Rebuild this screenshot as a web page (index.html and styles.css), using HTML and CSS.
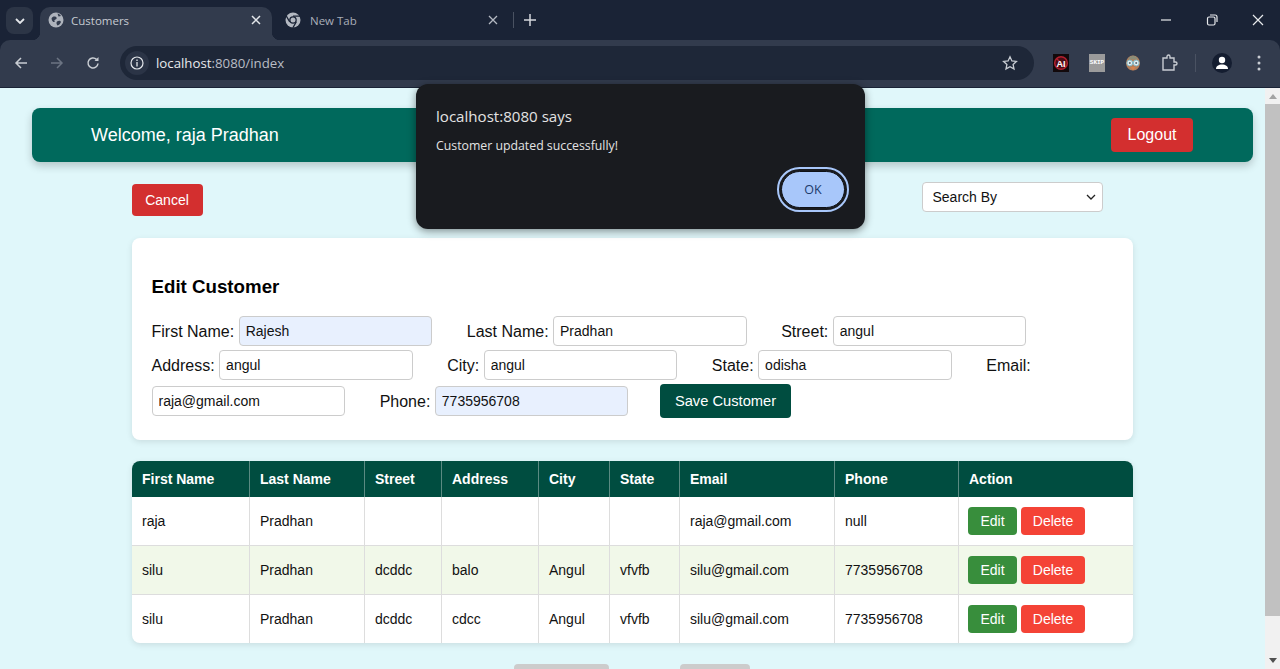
FILE: index.html
```html
<!DOCTYPE html>
<html>
<head>
	<meta charset="utf-8">
	<meta name="viewport" content="width=device-width, initial-scale=1">
	<title>Customers</title>
	<link rel="stylesheet" href="styles.css">
</head>
<body>
	<div class="browser-top">
		<div class="tabstrip">
			<div class="tab-search">
				<svg width="10" height="6" viewBox="0 0 10 6"><path d="M1 1l4 4 4-4" fill="none" stroke="#e3e6ea" stroke-width="1.8"/></svg>
			</div>
			<div class="tab tab-active">
				<svg class="tab-icon" width="16" height="16" viewBox="0 0 16 16"><circle cx="8" cy="8" r="7.500" fill="#aeb3bc"/><path d="M3.500 6.500c1-2 3-2.500 4.500-1.500 1 .7 1 2-.5 2.500-1.300.4-1.500 1.500-.5 2.500-1.500.5-3-.5-3.500-3.500zM9 9.500c1.500-1 3.500-1 4 .5-.5 1.500-2 3-3.500 3.500-1-1-1.500-3-.5-4z" fill="#323b4d"/><path d="M9.500 1.500c1.500.3 2.800 1.300 3.500 2.500l-2.500.5z" fill="#323b4d"/></svg>
				<span class="tab-title">Customers</span>
				<svg class="tab-close" width="10" height="10" viewBox="0 0 10 10"><path d="M1 1l8 8M9 1l-8 8" stroke="#e3e6ea" stroke-width="1.500"/></svg>
			</div>
			<div class="tab">
				<svg class="tab-icon" width="16" height="16" viewBox="0 0 16 16"><circle cx="8" cy="8" r="7.500" fill="#b4b9c2"/><circle cx="8" cy="8" r="3.800" fill="#1a2336"/><circle cx="8" cy="8" r="2.500" fill="#b4b9c2"/><path d="M8 4.200h7M4.700 9.900L1.200 3.900M11.300 9.900L7.800 15.900" stroke="#1a2336" stroke-width="1.200" fill="none"/></svg>
				<span class="tab-title dim">New Tab</span>
				<svg class="tab-close" width="10" height="10" viewBox="0 0 10 10"><path d="M1 1l8 8M9 1l-8 8" stroke="#b4b9c2" stroke-width="1.300"/></svg>
			</div>
			<div class="tab-sep"></div>
			<svg class="tab-new" width="12" height="12" viewBox="0 0 12 12"><path d="M6 0v12M0 6h12" stroke="#d5d8dd" stroke-width="1.500"/></svg>
			<div class="window-btns">
				<svg width="12" height="12" viewBox="0 0 12 12"><path d="M1 6h10" stroke="#e8eaed" stroke-width="1.200"/></svg>
				<svg width="12" height="12" viewBox="0 0 12 12"><rect x="1.500" y="3" width="7.500" height="8" rx="1.500" fill="none" stroke="#e8eaed" stroke-width="1.200"/><path d="M4 1h5a2 2 0 0 1 2 2v5" fill="none" stroke="#e8eaed" stroke-width="1.200"/></svg>
				<svg width="12" height="12" viewBox="0 0 12 12"><path d="M1 1l10 10M11 1L1 11" stroke="#e8eaed" stroke-width="1.200"/></svg>
			</div>
		</div>
		<div class="toolbar">
			<div class="nav-btns">
				<svg width="14" height="14" viewBox="0 0 14 14"><path d="M13 7H2M7 2L2 7l5 5" fill="none" stroke="#c9cdd3" stroke-width="1.500"/></svg>
				<svg width="14" height="14" viewBox="0 0 14 14"><path d="M1 7h11M7 2l5 5-5 5" fill="none" stroke="#6c7483" stroke-width="1.500"/></svg>
				<svg width="14" height="14" viewBox="0 0 14 14"><path d="M12 7.500A5 5 0 1 1 10.500 3.400" fill="none" stroke="#c9cdd3" stroke-width="1.500"/><path d="M12.500 1v4h-4z" fill="#c9cdd3"/></svg>
			</div>
			<div class="urlbar">
				<div class="url-info">
					<svg width="14" height="14" viewBox="0 0 14 14"><circle cx="7" cy="7" r="6" fill="none" stroke="#e3e6ea" stroke-width="1.200"/><path d="M7 6v4.500M7 3.500v1.400" stroke="#e3e6ea" stroke-width="1.300"/></svg>
				</div>
				<span class="url-text">localhost<span class="url-rest">:8080/index</span></span>
				<svg class="url-star" width="16" height="16" viewBox="0 0 16 16"><path d="M8 1.800l1.900 4.100 4.500.5-3.300 3 .9 4.500L8 11.700l-4 2.200.9-4.500-3.300-3 4.500-.5z" fill="none" stroke="#c9cdd3" stroke-width="1.300"/></svg>
			</div>
			<div class="ext-btns">
				<svg class="ext" width="16" height="18" viewBox="0 0 16 18"><rect width="16" height="18" fill="#12090b"/><circle cx="8" cy="9" r="6.300" fill="#4a0d16" stroke="#b3202f" stroke-width="1.500"/><path d="M3.500 4.500l9 9" stroke="#b3202f" stroke-width="1.300"/><text x="8" y="12.500" class="ext-ai">AI</text></svg>
				<div class="ext ext-skip">SKIP</div>
				<svg class="ext" width="16" height="18" viewBox="0 0 16 18"><path d="M1 9a7 7.500 0 0 1 14 0c0 4-3 7.500-7 7.500S1 13 1 9z" fill="#b5805c"/><path d="M3 5.500C4 3 6 1.800 8 1.800s4 1.200 5 3.700z" fill="#8c8d78"/><path d="M5.500 13h5L8 16.500z" fill="#d9824a"/><circle cx="4.800" cy="9" r="2.900" fill="#dfeef1" stroke="#86b9c6"/><circle cx="11.200" cy="9" r="2.900" fill="#dfeef1" stroke="#86b9c6"/><circle cx="4.800" cy="9" r="1" fill="#5b6a72"/><circle cx="11.200" cy="9" r="1" fill="#5b6a72"/></svg>
				<svg class="ext ext-puzzle" width="18" height="18" viewBox="0 0 18 18"><path d="M2 4h4V2.500a1.500 1.500 0 0 1 3 0V4h4v4h1.500a1.500 1.500 0 0 1 0 3H13v5H2z" fill="none" stroke="#c9cdd3" stroke-width="1.400"/></svg>
				<div class="tool-sep"></div>
				<div class="avatar">
					<svg width="14" height="14" viewBox="0 0 14 14"><circle cx="7" cy="4" r="3.200" fill="#fff"/><path d="M1 13c0-3 2.500-4.500 6-4.500s6 1.500 6 4.500z" fill="#fff"/></svg>
				</div>
				<svg class="menu-dots" width="4" height="16" viewBox="0 0 4 16"><circle cx="2" cy="2" r="1.500" fill="#c9cdd3"/><circle cx="2" cy="8" r="1.500" fill="#c9cdd3"/><circle cx="2" cy="14" r="1.500" fill="#c9cdd3"/></svg>
			</div>
		</div>
	</div>

	<div class="viewport">
		<div class="page">
			<div class="welcome">
				<span class="welcome-text">Welcome, raja Pradhan</span>
				<button class="logout">Logout</button>
			</div>

			<div class="container">
				<div class="actions">
					<button class="cancel">Cancel</button>
					<select class="search-by">
						<option>Search By</option>
					</select>
				</div>

				<div class="card">
					<h3>Edit Customer</h3>
					<form class="edit-form">
						<label>First Name:</label>
						<input class="autofilled" type="text" value="Rajesh">
						<label>Last Name:</label>
						<input type="text" value="Pradhan">
						<label>Street:</label>
						<input type="text" value="angul">
						<label>Address:</label>
						<input type="text" value="angul">
						<label>City:</label>
						<input type="text" value="angul">
						<label>State:</label>
						<input type="text" value="odisha">
						<label>Email:</label>
						<input type="text" value="raja@gmail.com">
						<label>Phone:</label>
						<input class="autofilled" type="text" value="7735956708"><button class="save" type="button">Save Customer</button>
					</form>
				</div>

				<table class="customers">
					<colgroup>
						<col class="c-first"><col class="c-last"><col class="c-street"><col class="c-address"><col class="c-city"><col class="c-state"><col class="c-email"><col class="c-phone"><col class="c-action">
					</colgroup>
					<thead>
						<tr>
							<th>First Name</th><th>Last Name</th><th>Street</th><th>Address</th><th>City</th><th>State</th><th>Email</th><th>Phone</th><th>Action</th>
						</tr>
					</thead>
					<tbody>
						<tr>
							<td>raja</td><td>Pradhan</td><td></td><td></td><td></td><td></td><td>raja@gmail.com</td><td>null</td>
							<td><div class="row-btns"><button class="edit">Edit</button><button class="delete">Delete</button></div></td>
						</tr>
						<tr>
							<td>silu</td><td>Pradhan</td><td>dcddc</td><td>balo</td><td>Angul</td><td>vfvfb</td><td>silu@gmail.com</td><td>7735956708</td>
							<td><div class="row-btns"><button class="edit">Edit</button><button class="delete">Delete</button></div></td>
						</tr>
						<tr>
							<td>silu</td><td>Pradhan</td><td>dcddc</td><td>cdcc</td><td>Angul</td><td>vfvfb</td><td>silu@gmail.com</td><td>7735956708</td>
							<td><div class="row-btns"><button class="edit">Edit</button><button class="delete">Delete</button></div></td>
						</tr>
					</tbody>
				</table>

				<div class="pager">
					<button class="pager-prev" aria-label="Previous"></button>
					<button class="pager-next" aria-label="Next"></button>
				</div>
			</div>
		</div>

		<div class="scrollbar">
			<div class="arrow-up"></div>
			<div class="thumb"></div>
			<div class="arrow-down"></div>
		</div>
	</div>

	<div class="dialog">
		<div class="dialog-title">localhost:8080 says</div>
		<div class="dialog-msg">Customer updated successfully!</div>
		<div class="dialog-foot">
			<button class="dialog-ok">OK</button>
		</div>
	</div>
</body>
</html>
```
FILE: styles.css
```css
body{
	margin: 0px;
	width: 1280px;
	height: 669px;
	overflow: hidden;
	display: flex;
	flex-direction: column;
	font-family: "Liberation Sans", Arial, sans-serif;
	background: #e0f7fa;
}

/* browser chrome */
.browser-top{
	flex: none;
	height: 88px;
	background: #1a2336;
	font-family: "Open Sans", "Noto Sans", sans-serif;
}

.tabstrip{
	height: 40px;
	display: flex;
	align-items: flex-end;
	padding-left: 6px;
}

.tab-search{
	width: 27px;
	height: 27px;
	margin: 0 7px 6px 0;
	border-radius: 8px;
	background: #2c3546;
	display: flex;
	align-items: center;
	justify-content: center;
}

.tab{
	position: relative;
	width: 232px;
	height: 33px;
	box-sizing: border-box;
	padding: 0 11px 7px 8px;
	display: flex;
	align-items: center;
	border-radius: 10px 10px 0 0;
}

.tab + .tab{
	margin-left: 5px;
}

.tab-active{
	background: #323b4d;
}

.tab-active:before, .tab-active:after{
	content: "";
	position: absolute;
	bottom: 0;
	width: 8px;
	height: 8px;
}

.tab-active:before{
	left: -8px;
	background: radial-gradient(circle at 0 0, transparent 8px, #323b4d 8.500px);
}

.tab-active:after{
	right: -8px;
	background: radial-gradient(circle at 100% 0, transparent 8px, #323b4d 8.500px);
}

.tab-title{
	flex: 1;
	margin-left: 7px;
	font-size: 11.500px;
	color: #c6cad1;
}

.tab-title.dim{
	margin-left: 9px;
	color: #a9aeb8;
}

.tab-sep{
	width: 1px;
	height: 16px;
	margin: 0 0 12px 4px;
	background: #4a5262;
}

.tab-new{
	margin: 0 0 14px 10px;
}

.window-btns{
	margin-left: auto;
	margin-right: -1px;
	width: 138px;
	height: 40px;
	display: flex;
	align-items: center;
	justify-content: space-around;
}

.toolbar{
	height: 47px;
	box-sizing: border-box;
	padding-bottom: 1px;
	background: #323b4d;
	border-radius: 10px 10px 0 0;
	display: flex;
	align-items: center;
}

.nav-btns{
	width: 120px;
	flex: none;
	padding: 0 20px 0 14px;
	box-sizing: border-box;
	display: flex;
	justify-content: space-between;
}

.urlbar{
	width: 914px;
	height: 34px;
	flex: none;
	border-radius: 17px;
	background: #1e2738;
	display: flex;
	align-items: center;
}

.url-info{
	width: 24px;
	height: 24px;
	margin-left: 5px;
	border-radius: 50%;
	background: #2b3446;
	display: flex;
	align-items: center;
	justify-content: center;
}

.url-text{
	margin-left: 7px;
	font-size: 13.250px;
	color: #e8eaed;
}

.url-rest{
	color: #b9bdc5;
}

.url-star{
	margin-left: auto;
	margin-right: 16px;
}

.ext-btns{
	flex: 1;
	display: flex;
	align-items: center;
	padding-left: 19px;
}

.ext{
	flex: none;
	margin-right: 20px;
}

.ext-puzzle{
	margin-right: 0px;
}

.ext-ai{
	font-family: "Liberation Sans", sans-serif;
	font-size: 9px;
	font-weight: bold;
	fill: #fff;
	text-anchor: middle;
}

.ext-skip{
	width: 16px;
	height: 18px;
	background: #9b9b9b;
	color: #fff;
	font-family: "Liberation Mono", monospace;
	font-size: 6px;
	font-weight: bold;
	line-height: 18px;
	text-align: center;
}

.tool-sep{
	width: 1px;
	height: 18px;
	margin-left: 16px;
	background: #4a5262;
}

.avatar{
	width: 20px;
	height: 20px;
	margin-left: 16px;
	border-radius: 50%;
	background: #141d30;
	display: flex;
	align-items: center;
	justify-content: center;
}

.menu-dots{
	margin-left: 25px;
}

/* page area */
.viewport{
	flex: 1;
	min-height: 0;
	display: flex;
}

.page{
	flex: 1;
	min-width: 0;
	overflow: hidden;
}

.welcome{
	height: 54px;
	margin: 20px 12px 0 32px;
	padding: 0 60px 0 59px;
	background: #00695c;
	border-radius: 8px;
	box-shadow: 0 4px 8px rgba(0,0,0,0.2);
	display: flex;
	align-items: center;
	justify-content: space-between;
}

.welcome-text{
	color: #fff;
	font-size: 18px;
}

button{
	font-family: inherit;
	border: none;
	color: #fff;
	border-radius: 4px;
}

.logout{
	width: 82px;
	height: 34px;
	background: #d32f2f;
	font-size: 16px;
}

.container{
	width: 1001px;
	margin-left: 131.500px;
}

.actions{
	height: 56px;
	padding: 20px 30px 0 0;
	display: flex;
	justify-content: space-between;
	align-items: flex-start;
}

.cancel{
	width: 71px;
	height: 32px;
	margin-top: 2px;
	background: #d32f2f;
	font-size: 14px;
}

.search-by{
	appearance: none;
	width: 181px;
	height: 30px;
	padding: 0 10px;
	border: 1px solid #ccc;
	border-radius: 4px;
	background: #fff url("data:image/svg+xml,%3Csvg xmlns='http://www.w3.org/2000/svg' width='10' height='6'%3E%3Cpath d='M1 1l4 4 4-4' fill='none' stroke='%23222' stroke-width='1.300'/%3E%3C/svg%3E") no-repeat right 6px center;
	color: #111;
	font-family: inherit;
	font-size: 14px;
}

.card{
	padding: 20px;
	background: #fff;
	border-radius: 8px;
	box-shadow: 0 2px 6px rgba(0,0,0,0.1);
}

.card h3{
	margin: 17.700px 0 16.700px 0;
	font-size: 18.720px;
	color: #000;
}

.edit-form{
	margin: 0px;
	font-size: 16px;
	color: #111;
}

.edit-form label{
	position: relative;
	top: 1px;
}

.edit-form input{
	width: 193.500px;
	height: 30px;
	box-sizing: border-box;
	margin: 2px 30.200px 2px 0;
	padding: 0 6px;
	vertical-align: middle;
	border: 1px solid #ccc;
	border-radius: 4px;
	background: #fff;
	color: #111;
	font-family: inherit;
	font-size: 14px;
}

.edit-form input.autofilled{
	background: #e8f0fe;
}

.save{
	height: 34px;
	width: 131px;
	margin: 2px 2px 2px 1.500px;
	vertical-align: middle;
	background: #004d40;
	font-size: 14.700px;
}

.customers{
	width: 1001px;
	margin: 21px 0 0 0.500px;
	table-layout: fixed;
	border-spacing: 0;
	border-radius: 8px;
	overflow: hidden;
	background: #fff;
	box-shadow: 0 2px 6px rgba(0,0,0,0.1);
	font-size: 14px;
	color: #111;
}

.c-first{ width: 118px; }
.c-last{ width: 115px; }
.c-street{ width: 77px; }
.c-address{ width: 97px; }
.c-city{ width: 71px; }
.c-state{ width: 70px; }
.c-email{ width: 155px; }
.c-phone{ width: 124px; }
.c-action{ width: 174px; }

.customers th{
	height: 36px;
	box-sizing: border-box;
	padding: 0 10px;
	background: #004d40;
	color: #fff;
	text-align: left;
	font-weight: bold;
	border-right: 1px solid #5b8a82;
}

.customers td{
	height: 49px;
	box-sizing: border-box;
	padding: 0 10px;
	border-right: 1px solid #ddd;
	border-bottom: 1px solid #ddd;
}

.customers th:last-child, .customers td:last-child{
	border-right: none;
}

.customers tr:nth-child(even) td{
	background: #f1f8e9;
}

.customers tr:last-child td{
	height: 48px;
	border-bottom: none;
}

.row-btns{
	display: flex;
	gap: 4px;
	margin-left: -1px;
}

.row-btns button{
	height: 28px;
	font-size: 14px;
}

.edit{
	width: 49px;
	background: #388e3c;
}

.delete{
	width: 64px;
	background: #f44336;
}

.pager{
	margin-top: 21px;
	display: flex;
	justify-content: center;
	gap: 71px;
}

.pager button{
	height: 36px;
	background: #ccc;
}

.pager-prev{
	width: 95px;
}

.pager-next{
	width: 70px;
}

/* scrollbar */
.scrollbar{
	width: 15px;
	flex: none;
	background: #f1f1f1;
	display: flex;
	flex-direction: column;
	align-items: center;
}

.arrow-up{
	margin: 6px 0 5px 0;
	border-left: 4px solid transparent;
	border-right: 4px solid transparent;
	border-bottom: 5px solid #a3a3a3;
}

.thumb{
	width: 15px;
	height: 512px;
	background: #c1c1c1;
}

.arrow-down{
	margin-top: auto;
	margin-bottom: 6px;
	border-left: 4px solid transparent;
	border-right: 4px solid transparent;
	border-top: 5px solid #505050;
}

/* alert box */
.dialog{
	position: absolute;
	left: 416px;
	top: 84px;
	width: 449px;
	height: 145px;
	box-sizing: border-box;
	padding: 22px 16px 16px 20px;
	background: #191b1f;
	border-radius: 12px;
	box-shadow: 0 2px 8px rgba(0,0,0,0.45);
	font-family: "Open Sans", "Noto Sans", sans-serif;
}

.dialog-title{
	font-size: 15.100px;
	line-height: 20px;
	color: #e3e3e3;
}

.dialog-msg{
	margin-top: 11px;
	font-size: 12.300px;
	line-height: 18px;
	color: #e3e3e3;
}

.dialog-foot{
	margin-top: 12px;
	display: flex;
	justify-content: flex-end;
}

.dialog-ok{
	width: 64px;
	height: 37px;
	margin: 4px;
	background: #a8c7fa;
	color: #1c3a6b;
	border-radius: 19px;
	font-size: 12.500px;
	outline: 2px solid #a8c7fa;
	outline-offset: 2px;
	border: 1px solid #0e1116;
}
```
